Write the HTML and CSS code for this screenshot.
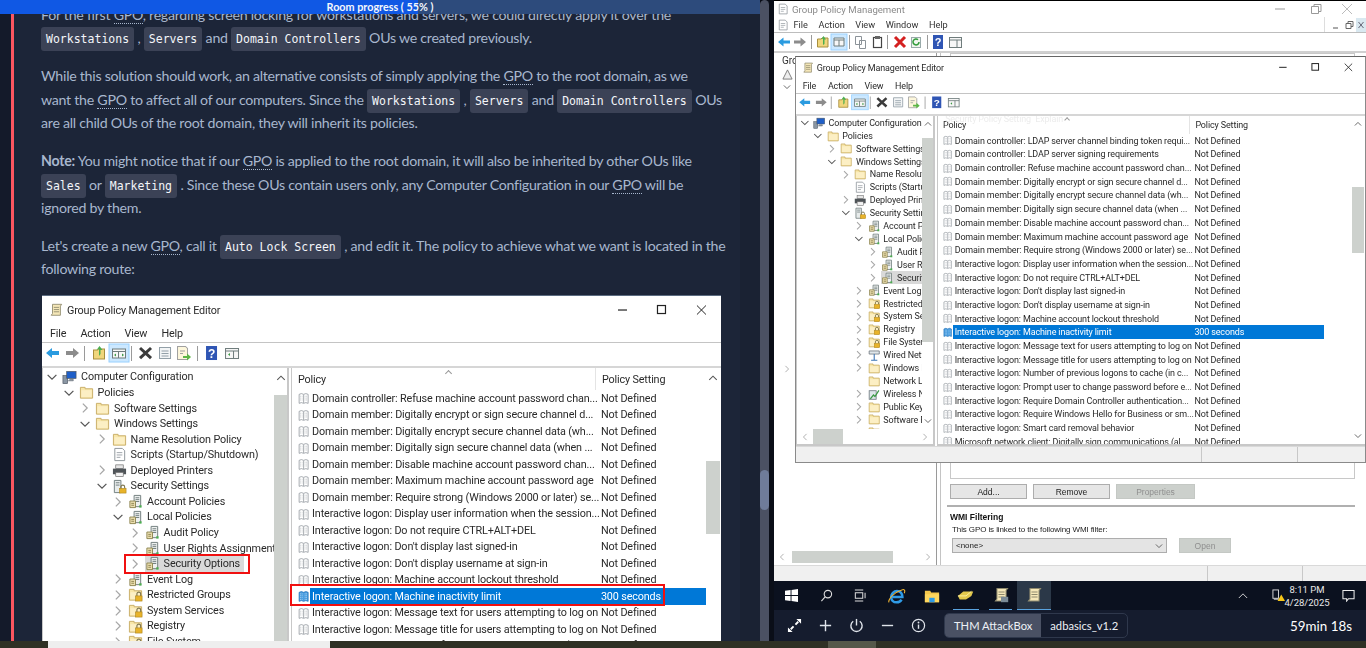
FILE: index.html
```html
<!DOCTYPE html>
<html lang="en">
<head>
    <meta charset="UTF-8">
    <meta name="viewport" content="width=device-width, initial-scale=1.0">
    <title>Room</title>
    <link rel="stylesheet" href="styles.css">
</head>
<body>
<svg class="defs" aria-hidden="true">
    <symbol id="chev-r" viewBox="0 0 16 16"><path d="M5.5 3l5 5-5 5" fill="none" stroke="#a6a6a6" stroke-width="1.4"/></symbol>
    <symbol id="chev-d" viewBox="0 0 16 16"><path d="M3 5.5l5 5 5-5" fill="none" stroke="#555" stroke-width="1.4"/></symbol>
    <symbol id="i-folder" viewBox="0 0 16 16"><path d="M1.5 2.5h5v1.5h8v10h-13z" fill="#f8e6a8" stroke="#c8ad66"/><path d="M2.5 5.5h11v7.5h-11z" fill="#fcefc4"/></symbol>
    <symbol id="i-lock" viewBox="0 0 16 16"><path d="M1.5 2.5h5v1.5h8v10h-13z" fill="#f8e6a8" stroke="#c8ad66"/><path d="M2.5 5.5h11v7.5h-11z" fill="#fcefc4"/><path d="M9.5 9.5v-2a2 2 0 0 1 4 0v2" fill="none" stroke="#7d7650" stroke-width="1.2"/><rect x="8" y="9.5" width="7" height="5.5" fill="#e8b32a" stroke="#a9811c" stroke-width=".6"/></symbol>
    <symbol id="i-policy" viewBox="0 0 16 16"><path d="M6.5 1.5h7v12h-7z" fill="#eef1f0" stroke="#6f7c7c"/><path d="M8 4h4M8 6h4M8 8h4" stroke="#6f7c7c"/><path d="M2 7.5h6v7H2z" fill="#ecdfb0" stroke="#8d8450"/><path d="M3.5 10h3M3.5 12h3" stroke="#8d8450"/><rect x="12" y="12" width="2.5" height="2.5" fill="#4caf50"/></symbol>
    <symbol id="i-doc" viewBox="0 0 16 16"><path d="M1.5 2.5l3-1 3 1 3-1 3 1v12l-3-1-3 1-3-1-3 1z" fill="#fff" stroke="#8b9298"/><path d="M7.5 3v11" stroke="#8b9298"/><path d="M3 5h3M3 7.500h3M3 10h3M9 5h3M9 7.500h3M9 10h3" stroke="#a9afb4" stroke-dasharray="1 1"/></symbol>
    <symbol id="i-doc-sel" viewBox="0 0 16 16"><path d="M1.5 2.5l3-1 3 1 3-1 3 1v12l-3-1-3 1-3-1-3 1z" fill="#4a9ee0" stroke="#1d6fb8"/><path d="M3 4.500h3M3 7h3M3 9.500h3M3 12h3M9 4.500h3M9 7h3M9 9.500h3M9 12h3" stroke="#cfe6f8" stroke-dasharray="1 1"/></symbol>
    <symbol id="i-comp" viewBox="0 0 16 16"><rect x="1" y="6" width="5" height="8.5" fill="#8b97a4" stroke="#4d5661" stroke-width=".7"/><rect x="5" y="1.5" width="10" height="7.5" fill="#1f5fc8" stroke="#4d5661" stroke-width=".7"/><path d="M8 10h4v1.5H6.5" fill="#9aa5ad" stroke="#4d5661" stroke-width=".6"/></symbol>
    <symbol id="i-script" viewBox="0 0 16 16"><path d="M3 1.5h8l2.5 2.5v10.5H3z" fill="#fff" stroke="#8b9298"/><path d="M5 6h6M5 8.5h6M5 11h4" stroke="#9aa0a6"/></symbol>
    <symbol id="i-printer" viewBox="0 0 16 16"><rect x="4" y="2" width="8" height="4" fill="#e6e6e6" stroke="#666" stroke-width=".7"/><rect x="1" y="6" width="14" height="6" fill="#4f5458"/><rect x="4" y="10" width="8" height="4.5" fill="#f2f2f2" stroke="#666" stroke-width=".7"/></symbol>
    <symbol id="i-sec" viewBox="0 0 16 16"><path d="M2.5 1.5h7v13h-7z" fill="#e8ecec" stroke="#6f7c7c"/><path d="M4 4h4M4 6.5h4" stroke="#6f7c7c"/><path d="M9.5 10V8.500a2 2 0 0 1 4 0V10" fill="none" stroke="#7d7650" stroke-width="1.2"/><rect x="8" y="10" width="7" height="5" fill="#e8b32a" stroke="#a9811c" stroke-width=".6"/></symbol>
    <symbol id="i-wired" viewBox="0 0 16 16"><path d="M1.5 2.5h13v4h-13z" fill="#dfe6ea" stroke="#69737a"/><path d="M8 6.500v8M4 14.500h8" stroke="#3d76b5" stroke-width="1.4"/></symbol>
    <symbol id="i-wifi" viewBox="0 0 16 16"><rect x="1.5" y="3.5" width="9" height="11" fill="#dfe6ea" stroke="#69737a"/><path d="M3 14l4-5 2 2 5-8" fill="none" stroke="#3d9a46" stroke-width="1.6"/></symbol>
    <symbol id="i-app" viewBox="0 0 16 16"><path d="M4 1.5h10.500l-1.500 2V14H2.500L4 12z" fill="#f5e7b8" stroke="#8f8a6e"/><path d="M5.500 5h6M5.500 7.500h6M5.500 10h6" stroke="#8f8a6e"/></symbol>
    <symbol id="winctl" viewBox="0 0 100 20"><path d="M5 10h9" stroke="#222" stroke-width="1.2"/><rect x="44.500" y="5.500" width="8" height="8" fill="none" stroke="#222" stroke-width="1.2"/><path d="M84 5.500l9 9M93 5.500l-9 9" stroke="#222"/></symbol>
    <symbol id="toolbar" viewBox="0 0 200 20">
        <path d="M4 10l6-5v3h7v4h-7v3z" fill="#2a9be0"/>
        <path d="M37 10l-6-5v3h-7v4h7v3z" fill="#8c8c8c"/>
        <path d="M42.500 3v15M89.500 3v15M155.500 3v15" stroke="#9a9a9a"/>
        <path d="M51.500 7h4l1-1h6v10h-11z" fill="#f0d67c" stroke="#a98f3e"/>
        <path d="M57 13V6l-2.500 1L57.500 3l3 4-2 0v4z" fill="#4caf50"/>
        <rect x="67" y="1" width="20" height="18" fill="#cce8ff" stroke="#99d1ff"/>
        <path d="M70.500 6h13v9h-13zM70.500 8.500h13M76.500 8.500V15" fill="#f7f7f7" stroke="#6f7c7c"/>
        <path d="M72 12l2-1.500v3zM82 12l-2-1.500v3z" fill="#3d9a46"/>
        <path d="M98 5l11 10M109 5L98 15" stroke="#3b3b3b" stroke-width="3"/>
        <path d="M117.500 4.500h11v11h-11z" fill="#f3f5f6" stroke="#93a0a8"/><path d="M119.500 8h7M119.500 10.500h7M119.500 13h7" stroke="#93a0a8"/>
        <path d="M135.500 3.500h8l2 2v11h-10z" fill="#fdf7dc" stroke="#a0a0a0"/><path d="M138 8h5M138 10.500h3" stroke="#a0a0a0"/>
        <path d="M141 13h4v-2.500l4 3.500-4 3.500v-2.500h-4z" fill="#5cb646"/>
        <rect x="164" y="3" width="11" height="14" fill="#2f55b4"/><text x="169.500" y="14.500" text-anchor="middle" font-size="12" font-weight="700" font-family="Liberation Sans" fill="#fff">?</text>
        <rect x="183.500" y="5.500" width="13" height="10" fill="#f7f7f7" stroke="#6f7c7c"/><path d="M183.500 8h13M191.500 8v7.500" stroke="#6f7c7c"/><path d="M186 11.500l2-1.500v3z" fill="#3d9a46"/>
    </symbol>
    <symbol id="backbar" viewBox="0 0 190 18">
        <path d="M4 9l5.500-4.500v3H16v3H9.500v3z" fill="#2a9be0"/>
        <path d="M32 9l-5.500-4.500v3H20v3h6.500v3z" fill="#8c8c8c"/>
        <path d="M37.500 2v14M75.500 2v14M113.500 2v14M153.500 2v14" stroke="#9a9a9a"/>
        <path d="M43.500 6h3.500l1-1h6v9h-10.500z" fill="#f0d67c" stroke="#a98f3e"/>
        <path d="M49 12V5.500l-2 1 2.500-3.500 2.500 3.500-1.500 0V11z" fill="#4caf50"/>
        <rect x="57" y="1" width="16" height="16" fill="#cce8ff" stroke="#99d1ff"/>
        <path d="M60 5h10v8H60zM60 7h10M65 7v6" fill="#f7f7f7" stroke="#6f7c7c"/>
        <path d="M81.500 3.500h6v8h-6zM85.500 7.500h6v8h-6z" fill="#fff" stroke="#8b9298"/>
        <rect x="99.500" y="4.500" width="8" height="10" fill="#fff" stroke="#444" stroke-width="1.2"/><rect x="101" y="3" width="5" height="3" fill="#666"/>
        <path d="M121 4l10 10M131 4l-10 10" stroke="#d42020" stroke-width="3"/>
        <rect x="137.500" y="4.500" width="9" height="10" fill="#f0f6ee" stroke="#9aa"/><path d="M145 9a3 3 0 1 1-1-2.300" fill="none" stroke="#2f9b3a" stroke-width="1.5"/>
        <rect x="159" y="2" width="10" height="14" fill="#2f55b4"/><text x="164" y="13" text-anchor="middle" font-size="11" font-weight="700" font-family="Liberation Sans" fill="#fff">?</text>
        <rect x="175.500" y="4.500" width="12" height="10" fill="#f7f7f7" stroke="#6f7c7c"/><path d="M175.500 7h12M183 7v7.500" stroke="#6f7c7c"/>
    </symbol>
</svg>

<div class="app">
    <div class="left">
        <div class="room-col">
            <div class="progress">
                <div class="progress-fill"></div>
                <span class="progress-label">Room progress ( 55% )</span>
            </div>
            <div class="room-body">
                <div class="strip"></div>
                <div class="redline"></div>
                <div class="article">
                    <p>For the first <abbr>GPO</abbr>, regarding screen locking for workstations and servers, we could directly apply it over the<br>
                    <code>Workstations</code> , <code>Servers</code> and <code>Domain Controllers</code> OUs we created previously.</p>
                    <p>While this solution should work, an alternative consists of simply applying the <abbr>GPO</abbr> to the root domain, as we<br>
                    want the <abbr>GPO</abbr> to affect all of our computers. Since the <code>Workstations</code> , <code>Servers</code> and <code>Domain Controllers</code> OUs<br>
                    are all child OUs of the root domain, they will inherit its policies.</p>
                    <p><b>Note:</b> You might notice that if our <abbr>GPO</abbr> is applied to the root domain, it will also be inherited by other OUs like<br>
                    <code>Sales</code> or <code>Marketing</code> . Since these OUs contain users only, any Computer Configuration in our <abbr>GPO</abbr> will be<br>
                    ignored by them.</p>
                    <p>Let's create a new <abbr>GPO</abbr>, call it <code>Auto Lock Screen</code> , and edit it. The policy to achieve what we want is located in the<br>
                    following route:</p>

                    <div class="figure">
                        <div class="gpe gpe-large">
                            <div class="gpe-title">
                                <svg class="app-ic"><use href="#i-app"/></svg>
                                <span>Group Policy Management Editor</span>
                                <svg class="win-ctl"><use href="#winctl"/></svg>
                            </div>
                            <div class="gpe-menu"><span>File</span><span>Action</span><span>View</span><span>Help</span></div>
                            <svg class="gpe-tools"><use href="#toolbar"/></svg>
                            <div class="panes">
                                <div class="tree">
                                    <div class="nodes">
                                        <div class="node l0"><svg class="tw"><use href="#chev-d"/></svg><svg class="ic"><use href="#i-comp"/></svg><span>Computer Configuration</span></div>
                                        <div class="node l1"><svg class="tw"><use href="#chev-d"/></svg><svg class="ic"><use href="#i-folder"/></svg><span>Policies</span></div>
                                        <div class="node l2"><svg class="tw"><use href="#chev-r"/></svg><svg class="ic"><use href="#i-folder"/></svg><span>Software Settings</span></div>
                                        <div class="node l2"><svg class="tw"><use href="#chev-d"/></svg><svg class="ic"><use href="#i-folder"/></svg><span>Windows Settings</span></div>
                                        <div class="node l3"><svg class="tw"><use href="#chev-r"/></svg><svg class="ic"><use href="#i-folder"/></svg><span>Name Resolution Policy</span></div>
                                        <div class="node l3"><i class="tw"></i><svg class="ic"><use href="#i-script"/></svg><span>Scripts (Startup/Shutdown)</span></div>
                                        <div class="node l3"><svg class="tw"><use href="#chev-r"/></svg><svg class="ic"><use href="#i-printer"/></svg><span>Deployed Printers</span></div>
                                        <div class="node l3"><svg class="tw"><use href="#chev-d"/></svg><svg class="ic"><use href="#i-sec"/></svg><span>Security Settings</span></div>
                                        <div class="node l4"><svg class="tw"><use href="#chev-r"/></svg><svg class="ic"><use href="#i-policy"/></svg><span>Account Policies</span></div>
                                        <div class="node l4"><svg class="tw"><use href="#chev-d"/></svg><svg class="ic"><use href="#i-policy"/></svg><span>Local Policies</span></div>
                                        <div class="node l5"><svg class="tw"><use href="#chev-r"/></svg><svg class="ic"><use href="#i-policy"/></svg><span>Audit Policy</span></div>
                                        <div class="node l5"><svg class="tw"><use href="#chev-r"/></svg><svg class="ic"><use href="#i-policy"/></svg><span>User Rights Assignment</span></div>
                                        <div class="node l5 current"><svg class="tw"><use href="#chev-r"/></svg><div class="current-box"><svg class="ic"><use href="#i-policy"/></svg><span>Security Options</span></div></div>
                                        <div class="node l4"><svg class="tw"><use href="#chev-r"/></svg><svg class="ic"><use href="#i-policy"/></svg><span>Event Log</span></div>
                                        <div class="node l4"><svg class="tw"><use href="#chev-r"/></svg><svg class="ic"><use href="#i-lock"/></svg><span>Restricted Groups</span></div>
                                        <div class="node l4"><svg class="tw"><use href="#chev-r"/></svg><svg class="ic"><use href="#i-lock"/></svg><span>System Services</span></div>
                                        <div class="node l4"><svg class="tw"><use href="#chev-r"/></svg><svg class="ic"><use href="#i-lock"/></svg><span>Registry</span></div>
                                        <div class="node l4"><svg class="tw"><use href="#chev-r"/></svg><svg class="ic"><use href="#i-lock"/></svg><span>File System</span></div>
                                    </div>
                                    <div class="sb sb-tree"><svg class="sb-arrow"><use href="#chev-d"/></svg><div class="sb-thumb"></div></div>
                                </div>
                                <div class="list">
                                    <div class="list-main">
                                        <div class="list-head"><span class="head-name">Policy</span><span class="head-val">Policy Setting</span><i class="sort-caret"></i></div>
                                        <div class="row"><svg class="ic"><use href="#i-doc"/></svg><div class="cell"><span class="name">Domain controller: Refuse machine account password chan...</span><span>Not Defined</span></div></div>
                                        <div class="row"><svg class="ic"><use href="#i-doc"/></svg><div class="cell"><span class="name">Domain member: Digitally encrypt or sign secure channel d...</span><span>Not Defined</span></div></div>
                                        <div class="row"><svg class="ic"><use href="#i-doc"/></svg><div class="cell"><span class="name">Domain member: Digitally encrypt secure channel data (wh...</span><span>Not Defined</span></div></div>
                                        <div class="row"><svg class="ic"><use href="#i-doc"/></svg><div class="cell"><span class="name">Domain member: Digitally sign secure channel data (when ...</span><span>Not Defined</span></div></div>
                                        <div class="row"><svg class="ic"><use href="#i-doc"/></svg><div class="cell"><span class="name">Domain member: Disable machine account password chan...</span><span>Not Defined</span></div></div>
                                        <div class="row"><svg class="ic"><use href="#i-doc"/></svg><div class="cell"><span class="name">Domain member: Maximum machine account password age</span><span>Not Defined</span></div></div>
                                        <div class="row"><svg class="ic"><use href="#i-doc"/></svg><div class="cell"><span class="name">Domain member: Require strong (Windows 2000 or later) se...</span><span>Not Defined</span></div></div>
                                        <div class="row"><svg class="ic"><use href="#i-doc"/></svg><div class="cell"><span class="name">Interactive logon: Display user information when the session...</span><span>Not Defined</span></div></div>
                                        <div class="row"><svg class="ic"><use href="#i-doc"/></svg><div class="cell"><span class="name">Interactive logon: Do not require CTRL+ALT+DEL</span><span>Not Defined</span></div></div>
                                        <div class="row"><svg class="ic"><use href="#i-doc"/></svg><div class="cell"><span class="name">Interactive logon: Don't display last signed-in</span><span>Not Defined</span></div></div>
                                        <div class="row"><svg class="ic"><use href="#i-doc"/></svg><div class="cell"><span class="name">Interactive logon: Don't display username at sign-in</span><span>Not Defined</span></div></div>
                                        <div class="row"><svg class="ic"><use href="#i-doc"/></svg><div class="cell"><span class="name">Interactive logon: Machine account lockout threshold</span><span>Not Defined</span></div></div>
                                        <div class="row selected"><svg class="ic"><use href="#i-doc-sel"/></svg><div class="cell"><span class="name">Interactive logon: Machine inactivity limit</span><span>300 seconds</span></div></div>
                                        <div class="row"><svg class="ic"><use href="#i-doc"/></svg><div class="cell"><span class="name">Interactive logon: Message text for users attempting to log on</span><span>Not Defined</span></div></div>
                                        <div class="row"><svg class="ic"><use href="#i-doc"/></svg><div class="cell"><span class="name">Interactive logon: Message title for users attempting to log on</span><span>Not Defined</span></div></div>
                                        <div class="row"><svg class="ic"><use href="#i-doc"/></svg><div class="cell"><span class="name">Interactive logon: Number of previous logons to cache (in c...</span><span>Not Defined</span></div></div>
                                    </div>
                                    <div class="sb sb-list"><svg class="sb-arrow"><use href="#chev-d"/></svg><div class="sb-thumb"></div></div>
                                </div>
                            </div>
                        </div>
                        <div class="mark mark-tree"></div>
                        <div class="mark mark-row"></div>
                    </div>
                </div>
                <div class="article-edge"></div>
            </div>
        </div>
        <div class="vbar"><div class="vbar-thumb"></div></div>
    </div>

    <div class="remote">
        <div class="desk">
            <div class="backwin">
                <div class="bw-title">
                    <svg class="bw-ic"><use href="#i-script"/></svg><span>Group Policy Management</span>
                    <svg class="bw-ctl" viewBox="0 0 90 16"><path d="M2 8h10" stroke="#999"/><path d="M38.500 5.500h7v7h-7zM41 5.500V3.500h7v7h-2.500" fill="none" stroke="#999"/><path d="M69 3l10 10M79 3L69 13" stroke="#bbb"/></svg>
                </div>
                <div class="bw-menu">
                    <svg class="bw-ic"><use href="#i-script"/></svg>
                    <span>File</span><span>Action</span><span>View</span><span>Window</span><span>Help</span>
                    <svg class="bw-mdi" viewBox="0 0 42 16"><path d="M0 0v16" stroke="#bbb"/><path d="M9 11h5" stroke="#555"/><path d="M22 6.500h5v5h-5zM24 6.500V4.500h5v5h-2" fill="none" stroke="#666"/><rect x="32" y="1" width="10" height="14" fill="#d9e8f0"/><path d="M34.500 5l5 6M39.500 5l-5 6" stroke="#667"/></svg>
                </div>
                <svg class="bw-tools"><use href="#backbar"/></svg>
                <div class="bw-body">
                    <div class="bw-tree">
                        <div class="bw-tree-rows">
                            <div class="bw-gro">Gro</div>
                            <svg class="bw-tri" viewBox="0 0 12 12"><path d="M6 1l5 10H1z" fill="#eee" stroke="#777"/></svg>
                            <svg class="bw-chev"><use href="#chev-d"/></svg>
                            <svg class="bw-chev-low"><use href="#chev-r"/></svg>
                        </div>
                        <div class="hscroll hscroll-back"><svg class="hs-arrow flip"><use href="#chev-r"/></svg><div class="hs-thumb"></div><svg class="hs-arrow"><use href="#chev-r"/></svg></div>
                    </div>
                    <div class="bw-detail">
                        <div class="gpo-box"></div>
                        <div class="bw-buttons"><span class="btn">Add...</span><span class="btn">Remove</span><span class="btn off">Properties</span></div>
                        <div class="bw-rule"></div>
                        <div class="wmi-title">WMI Filtering</div>
                        <div class="wmi-desc">This GPO is linked to the following WMI filter:</div>
                        <div class="wmi-row">
                            <div class="wmi-select"><span>&lt;none&gt;</span><svg class="wmi-chev"><use href="#chev-d"/></svg></div>
                            <span class="btn off open">Open</span>
                        </div>
                    </div>
                </div>
                <div class="statusbar"><span class="st st-a"></span><span class="st st-b"></span></div>
            </div>

            <div class="gpe gpe-small">
                <div class="gpe-title">
                    <svg class="app-ic"><use href="#i-app"/></svg>
                    <span>Group Policy Management Editor</span>
                    <svg class="win-ctl"><use href="#winctl"/></svg>
                </div>
                <div class="gpe-menu"><span>File</span><span>Action</span><span>View</span><span>Help</span></div>
                <svg class="gpe-tools"><use href="#toolbar"/></svg>
                <div class="panes">
                    <div class="tree">
                        <div class="tree-inner">
                            <div class="nodes">
                                <div class="node l0"><svg class="tw"><use href="#chev-d"/></svg><svg class="ic"><use href="#i-comp"/></svg><span>Computer Configuration</span></div>
                                <div class="node l1"><svg class="tw"><use href="#chev-d"/></svg><svg class="ic"><use href="#i-folder"/></svg><span>Policies</span></div>
                                <div class="node l2"><svg class="tw"><use href="#chev-r"/></svg><svg class="ic"><use href="#i-folder"/></svg><span>Software Settings</span></div>
                                <div class="node l2"><svg class="tw"><use href="#chev-d"/></svg><svg class="ic"><use href="#i-folder"/></svg><span>Windows Settings</span></div>
                                <div class="node l3"><svg class="tw"><use href="#chev-r"/></svg><svg class="ic"><use href="#i-folder"/></svg><span>Name Resolution Policy</span></div>
                                <div class="node l3"><i class="tw"></i><svg class="ic"><use href="#i-script"/></svg><span>Scripts (Startup/Shutdown)</span></div>
                                <div class="node l3"><svg class="tw"><use href="#chev-r"/></svg><svg class="ic"><use href="#i-printer"/></svg><span>Deployed Printers</span></div>
                                <div class="node l3"><svg class="tw"><use href="#chev-d"/></svg><svg class="ic"><use href="#i-sec"/></svg><span>Security Settings</span></div>
                                <div class="node l4"><svg class="tw"><use href="#chev-r"/></svg><svg class="ic"><use href="#i-policy"/></svg><span>Account Policies</span></div>
                                <div class="node l4"><svg class="tw"><use href="#chev-d"/></svg><svg class="ic"><use href="#i-policy"/></svg><span>Local Policies</span></div>
                                <div class="node l5"><svg class="tw"><use href="#chev-r"/></svg><svg class="ic"><use href="#i-policy"/></svg><span>Audit Policy</span></div>
                                <div class="node l5"><svg class="tw"><use href="#chev-r"/></svg><svg class="ic"><use href="#i-policy"/></svg><span>User Rights Assignment</span></div>
                                <div class="node l5 current"><svg class="tw"><use href="#chev-r"/></svg><div class="current-box"><svg class="ic"><use href="#i-policy"/></svg><span>Security Options</span></div></div>
                                <div class="node l4"><svg class="tw"><use href="#chev-r"/></svg><svg class="ic"><use href="#i-policy"/></svg><span>Event Log</span></div>
                                <div class="node l4"><svg class="tw"><use href="#chev-r"/></svg><svg class="ic"><use href="#i-lock"/></svg><span>Restricted Groups</span></div>
                                <div class="node l4"><svg class="tw"><use href="#chev-r"/></svg><svg class="ic"><use href="#i-lock"/></svg><span>System Services</span></div>
                                <div class="node l4"><svg class="tw"><use href="#chev-r"/></svg><svg class="ic"><use href="#i-lock"/></svg><span>Registry</span></div>
                                <div class="node l4"><svg class="tw"><use href="#chev-r"/></svg><svg class="ic"><use href="#i-lock"/></svg><span>File System</span></div>
                                <div class="node l4"><svg class="tw"><use href="#chev-r"/></svg><svg class="ic"><use href="#i-wired"/></svg><span>Wired Network</span></div>
                                <div class="node l4"><svg class="tw"><use href="#chev-r"/></svg><svg class="ic"><use href="#i-folder"/></svg><span>Windows Firewall</span></div>
                                <div class="node l4"><i class="tw"></i><svg class="ic"><use href="#i-folder"/></svg><span>Network List</span></div>
                                <div class="node l4"><svg class="tw"><use href="#chev-r"/></svg><svg class="ic"><use href="#i-wifi"/></svg><span>Wireless Network</span></div>
                                <div class="node l4"><svg class="tw"><use href="#chev-r"/></svg><svg class="ic"><use href="#i-folder"/></svg><span>Public Key</span></div>
                                <div class="node l4"><svg class="tw"><use href="#chev-r"/></svg><svg class="ic"><use href="#i-folder"/></svg><span>Software Restriction</span></div>
                                <div class="node l4"><svg class="tw"><use href="#chev-r"/></svg><svg class="ic"><use href="#i-folder"/></svg><span>Application Control</span></div>
                            </div>
                            <div class="sb sb-tree"><svg class="sb-arrow"><use href="#chev-d"/></svg><div class="sb-thumb"></div><svg class="sb-arrow sb-down"><use href="#chev-d"/></svg></div>
                        </div>
                        <div class="hscroll"><svg class="hs-arrow flip"><use href="#chev-r"/></svg><div class="hs-thumb"></div><svg class="hs-arrow"><use href="#chev-r"/></svg></div>
                    </div>
                    <div class="list">
                        <div class="list-main">
                            <div class="list-head"><span class="head-ghost">Security Policy Setting &nbsp;Explain</span><span class="head-name">Policy</span><span class="head-val">Policy Setting</span><i class="sort-caret"></i></div>
                            <div class="row"><svg class="ic"><use href="#i-doc"/></svg><div class="cell"><span class="name">Domain controller: LDAP server channel binding token requi...</span><span>Not Defined</span></div></div>
                            <div class="row"><svg class="ic"><use href="#i-doc"/></svg><div class="cell"><span class="name">Domain controller: LDAP server signing requirements</span><span>Not Defined</span></div></div>
                            <div class="row"><svg class="ic"><use href="#i-doc"/></svg><div class="cell"><span class="name">Domain controller: Refuse machine account password chan...</span><span>Not Defined</span></div></div>
                            <div class="row"><svg class="ic"><use href="#i-doc"/></svg><div class="cell"><span class="name">Domain member: Digitally encrypt or sign secure channel d...</span><span>Not Defined</span></div></div>
                            <div class="row"><svg class="ic"><use href="#i-doc"/></svg><div class="cell"><span class="name">Domain member: Digitally encrypt secure channel data (wh...</span><span>Not Defined</span></div></div>
                            <div class="row"><svg class="ic"><use href="#i-doc"/></svg><div class="cell"><span class="name">Domain member: Digitally sign secure channel data (when ...</span><span>Not Defined</span></div></div>
                            <div class="row"><svg class="ic"><use href="#i-doc"/></svg><div class="cell"><span class="name">Domain member: Disable machine account password chan...</span><span>Not Defined</span></div></div>
                            <div class="row"><svg class="ic"><use href="#i-doc"/></svg><div class="cell"><span class="name">Domain member: Maximum machine account password age</span><span>Not Defined</span></div></div>
                            <div class="row"><svg class="ic"><use href="#i-doc"/></svg><div class="cell"><span class="name">Domain member: Require strong (Windows 2000 or later) se...</span><span>Not Defined</span></div></div>
                            <div class="row"><svg class="ic"><use href="#i-doc"/></svg><div class="cell"><span class="name">Interactive logon: Display user information when the session...</span><span>Not Defined</span></div></div>
                            <div class="row"><svg class="ic"><use href="#i-doc"/></svg><div class="cell"><span class="name">Interactive logon: Do not require CTRL+ALT+DEL</span><span>Not Defined</span></div></div>
                            <div class="row"><svg class="ic"><use href="#i-doc"/></svg><div class="cell"><span class="name">Interactive logon: Don't display last signed-in</span><span>Not Defined</span></div></div>
                            <div class="row"><svg class="ic"><use href="#i-doc"/></svg><div class="cell"><span class="name">Interactive logon: Don't display username at sign-in</span><span>Not Defined</span></div></div>
                            <div class="row"><svg class="ic"><use href="#i-doc"/></svg><div class="cell"><span class="name">Interactive logon: Machine account lockout threshold</span><span>Not Defined</span></div></div>
                            <div class="row selected"><svg class="ic"><use href="#i-doc-sel"/></svg><div class="cell"><span class="name">Interactive logon: Machine inactivity limit</span><span>300 seconds</span></div></div>
                            <div class="row"><svg class="ic"><use href="#i-doc"/></svg><div class="cell"><span class="name">Interactive logon: Message text for users attempting to log on</span><span>Not Defined</span></div></div>
                            <div class="row"><svg class="ic"><use href="#i-doc"/></svg><div class="cell"><span class="name">Interactive logon: Message title for users attempting to log on</span><span>Not Defined</span></div></div>
                            <div class="row"><svg class="ic"><use href="#i-doc"/></svg><div class="cell"><span class="name">Interactive logon: Number of previous logons to cache (in c...</span><span>Not Defined</span></div></div>
                            <div class="row"><svg class="ic"><use href="#i-doc"/></svg><div class="cell"><span class="name">Interactive logon: Prompt user to change password before e...</span><span>Not Defined</span></div></div>
                            <div class="row"><svg class="ic"><use href="#i-doc"/></svg><div class="cell"><span class="name">Interactive logon: Require Domain Controller authentication...</span><span>Not Defined</span></div></div>
                            <div class="row"><svg class="ic"><use href="#i-doc"/></svg><div class="cell"><span class="name">Interactive logon: Require Windows Hello for Business or sm...</span><span>Not Defined</span></div></div>
                            <div class="row"><svg class="ic"><use href="#i-doc"/></svg><div class="cell"><span class="name">Interactive logon: Smart card removal behavior</span><span>Not Defined</span></div></div>
                            <div class="row"><svg class="ic"><use href="#i-doc"/></svg><div class="cell"><span class="name">Microsoft network client: Digitally sign communications (al...</span><span>Not Defined</span></div></div>
                        </div>
                        <div class="sb sb-list"><svg class="sb-arrow"><use href="#chev-d"/></svg><div class="sb-thumb"></div><svg class="sb-arrow sb-down"><use href="#chev-d"/></svg></div>
                    </div>
                </div>
                <div class="statusbar"><span class="st st-a"></span><span class="st st-b"></span></div>
            </div>
        </div>

        <div class="taskbar">
            <svg class="tb-win" viewBox="0 0 14 14"><path d="M0 2l6-1v5.500H0zM7 1l7-1v6.500H7zM0 7.500h6V13l-6-1zM7 7.500h7V14l-7-1z" fill="#fff"/></svg>
            <svg class="tb-search" viewBox="0 0 14 14"><circle cx="8.500" cy="5.500" r="4" fill="none" stroke="#ddd" stroke-width="1.2"/><path d="M5.500 8.500L1.500 13" stroke="#ddd" stroke-width="1.2"/></svg>
            <svg class="tb-view" viewBox="0 0 14 14"><path d="M2 1h9M2 13h9M2.500 4h8v6h-8zM13 4v6" fill="none" stroke="#ddd" stroke-width="1.1"/></svg>
            <svg class="tb-ie" viewBox="0 0 20 20"><path d="M4 11h12c0-4-2.500-6.500-6-6.500S3.500 7.500 3.500 11s2.500 6 6 6c2.500 0 4.500-1 5.500-3" fill="none" stroke="#2f9be6" stroke-width="2.8"/><path d="M1 17c-1-3 5-11 15-14 3-1 3 2 2 4" fill="none" stroke="#f2b632" stroke-width="1.2"/></svg>
            <svg class="tb-folder" viewBox="0 0 18 18"><path d="M1 3h6l1 2h9v11H1z" fill="#f5c84c"/><rect x="1" y="7" width="16" height="9" fill="#ffd75e"/><rect x="6" y="11" width="6" height="5" fill="#2f9be6"/></svg>
            <div class="tb-item tb-gold"><svg viewBox="0 0 20 14"><path d="M1 8l6-5h11l-2 5-6 4H3z" fill="#e2c84c"/><path d="M1 8h9l6-5" fill="none" stroke="#fff3a8"/></svg></div>
            <div class="tb-item tb-scroll"><svg viewBox="0 0 18 20"><use href="#i-app"/><rect x="9" y="12" width="8" height="6" fill="#7a8a96"/></svg></div>
            <div class="tb-item tb-active"><svg viewBox="0 0 18 20"><use href="#i-app"/></svg></div>
            <svg class="tb-up" viewBox="0 0 12 8"><path d="M1 7l5-5 5 5" fill="none" stroke="#ddd" stroke-width="1.1"/></svg>
            <svg class="tb-net" viewBox="0 0 14 14"><rect x="1" y="1" width="6" height="9" fill="none" stroke="#ddd"/><path d="M2 11h8" stroke="#ddd"/><path d="M10 6l4 7H6z" fill="#f5c518"/></svg>
            <div class="tb-clock"><span>8:11 PM</span><span>4/28/2025</span></div>
            <svg class="tb-note" viewBox="0 0 14 14"><path d="M1 1.500h12v9H7l-2 2.500v-2.500H1z" fill="none" stroke="#eee" stroke-width="1.1"/></svg>
        </div>

        <div class="thm">
            <svg class="thm-ic" viewBox="0 0 16 16"><path d="M10 1h5v5zM1 15v-5l5 5z" fill="#fff"/><path d="M12 4L9 7M4 12l3-3" stroke="#fff" stroke-width="2"/></svg>
            <svg class="thm-ic" viewBox="0 0 16 16"><path d="M8 2v12M2 8h12" stroke="#dfe3ea" stroke-width="1.5"/></svg>
            <svg class="thm-ic" viewBox="0 0 16 16"><path d="M8 1v7" stroke="#dfe3ea" stroke-width="1.5"/><path d="M4.500 3.500a6 6 0 1 0 7 0" fill="none" stroke="#dfe3ea" stroke-width="1.5"/></svg>
            <svg class="thm-ic" viewBox="0 0 16 16"><path d="M2 8h12" stroke="#dfe3ea" stroke-width="1.5"/></svg>
            <svg class="thm-ic" viewBox="0 0 16 16"><circle cx="8" cy="8" r="6.500" fill="none" stroke="#dfe3ea" stroke-width="1.3"/><path d="M8 7v4.500" stroke="#dfe3ea" stroke-width="1.5"/><circle cx="8" cy="4.800" r="1" fill="#dfe3ea"/></svg>
            <div class="thm-tabs"><span class="thm-tab on">THM AttackBox</span><span class="thm-tab">adbasics_v1.2</span></div>
            <span class="thm-time">59min 18s</span>
        </div>
    </div>
</div>
<div class="wallpaper"><span class="wp-light"></span><span class="wp-grey"></span></div>
</body>
</html>
```

FILE: styles.css
```css
* {
    margin: 0;
    padding: 0;
    box-sizing: border-box;
}

html, body {
    width: 1366px;
    height: 648px;
    overflow: hidden;
    background: #2f3125;
}

.defs {
    display: none;
}

.app {
    display: flex;
    height: 641px;
    background: #0a0e18;
}

/* left: the room article */
.left {
    display: flex;
    width: 769px;
    flex-shrink: 0;
}

.room-col {
    width: 760px;
    display: flex;
    flex-direction: column;
    overflow: hidden;
}

.progress {
    height: 14px;
    display: flex;
    justify-content: center;
    background: #2d4b7c;
    position: relative;
    z-index: 1;
    flex-shrink: 0;
}

.progress-fill {
    position: absolute;
    left: 0;
    top: 0;
    bottom: 0;
    width: 55%;
    background: #1058e4;
}

.progress-label {
    position: relative;
    font: 700 10.8px/14px Lato, sans-serif;
    color: #f4f7fc;
}

.room-body {
    flex: 1;
    display: flex;
    min-height: 0;
    margin-top: -11px;
}

.strip {
    width: 11px;
    background: #141a2a;
}

.redline {
    width: 3px;
    background: #fb5660;
}

.article {
    width: 726px;
    padding-left: 27px;
    background: #1c2538;
    color: #a8b7ce;
    font: 14.2px/23.4px Lato, sans-serif;
    letter-spacing: -.27px;
    display: flex;
    flex-direction: column;
    white-space: nowrap;
}

.article-edge {
    flex: 1;
    background: #1a2233;
}

.article p {
    margin-bottom: 14.6px;
}

.article b {
    font-weight: 700;
}

abbr {
    border-bottom: 1px dotted #a8b7ce;
}

code {
    font: 11.5px "DejaVu Sans Mono", monospace;
    letter-spacing: 0;
    background: #3b4256;
    color: #f4f6fa;
    padding: 5px 5px;
    border-radius: 3px;
}

.figure {
    flex: 1;
    min-height: 0;
    margin-left: 1px;
    width: 679px;
    position: relative;
    overflow: hidden;
    border-top: 1px solid #5b6b80;
}

.mark {
    position: absolute;
    border: 2px solid #f01010;
}

.mark-tree {
    left: 82px;
    top: 258px;
    width: 126px;
    height: 20px;
}

.mark-row {
    left: 248px;
    top: 288px;
    width: 375px;
    height: 22px;
}

.vbar {
    width: 9px;
    background: #4b5163;
    border-radius: 5px 5px 0 0;
    padding-top: 470px;
}

.vbar-thumb {
    height: 40px;
    background: #6f7c9a;
    border-radius: 5px;
}

/* group policy editor window, sizes in em so the two copies scale together */
.gpe {
    display: flex;
    flex-direction: column;
    background: #fff;
    color: #2a2a2a;
    font-family: Roboto, "Noto Sans", sans-serif;
    letter-spacing: -.012em;
    white-space: nowrap;
    overflow: hidden;
    filter: blur(.3px);
}

.gpe span {
    font-size: .9em;
}

.gpe-large {
    font-size: 12px;
    height: 100%;
}

.gpe-small {
    font-size: 9.96px;
    position: absolute;
    left: 21px;
    top: 55px;
    width: 571px;
    height: 407px;
    border: 1px solid #8a8a8a;
    border-top-color: #666;
}

.gpe-title {
    height: 2.33em;
    display: flex;
    align-items: center;
    padding: 0 .67em 0 .58em;
    flex-shrink: 0;
}

.gpe-small .gpe-title {
    height: 21px;
}

.gpe-title span {
    margin-left: .37em;
}

.app-ic {
    width: 1.17em;
    height: 1.17em;
}

.win-ctl {
    margin-left: auto;
    width: 8.33em;
    height: 1.67em;
}

.gpe-menu {
    height: 1.58em;
    display: flex;
    align-items: center;
    gap: 1.17em;
    padding-left: .67em;
    border-bottom: 1px solid #c4c4c4;
    flex-shrink: 0;
}

.gpe-small .gpe-menu {
    height: 16px;
}

.gpe-tools {
    width: 16.67em;
    height: 1.67em;
    display: block;
    flex-shrink: 0;
}

.panes {
    flex: 1;
    min-height: 0;
    display: flex;
    margin-top: .25em;
    background: #fff;
    border-top: 2px solid #d6d6d6;
}

.gpe-small .panes {
    margin-top: 3px;
}

.tree {
    display: flex;
    border: 1px solid #c8c8c8;
    border-width: 0 2px 0 1px;
    overflow: hidden;
    flex-shrink: 0;
}

.gpe-large .tree {
    width: 247px;
}

.gpe-small .tree {
    width: 139px;
    flex-direction: column;
    border-bottom-width: 2px;
}

.tree-inner {
    flex: 1;
    min-height: 0;
    display: flex;
}

.nodes {
    flex: 1;
    min-width: 0;
    overflow: hidden;
    padding-top: .08em;
}

.node {
    height: 1.297em;
    display: flex;
    align-items: center;
}

.l0 { padding-left: .17em; }
.l1 { padding-left: 1.55em; }
.l2 { padding-left: 2.92em; }
.l3 { padding-left: 4.3em; }
.l4 { padding-left: 5.67em; }
.l5 { padding-left: 7.05em; }

.tw {
    width: 1.17em;
    height: 1.17em;
    margin-right: .25em;
    flex-shrink: 0;
}

.ic {
    width: 1.25em;
    height: 1.25em;
    flex-shrink: 0;
}

.node span {
    margin-left: .37em;
}

.current-box {
    display: flex;
    align-items: center;
    width: 8.25em;
    height: 100%;
    background: #d9d9d9;
}

.sb {
    display: flex;
    flex-direction: column;
    flex-shrink: 0;
    align-items: center;
}

.sb-arrow {
    width: 1em;
    height: 1em;
    margin-top: .3em;
    transform: rotate(180deg);
    flex-shrink: 0;
}

.sb-down {
    transform: none;
    margin-top: auto;
    margin-bottom: .3em;
}

.sb-thumb {
    width: 100%;
    background: #cdd1cd;
}

.sb-tree {
    width: 1.08em;
}

.sb-list {
    width: 1.17em;
    margin-right: .1em;
}

.gpe-large .sb-tree .sb-thumb {
    margin-top: 11px;
    height: 260px;
}

.gpe-large .sb-list .sb-thumb {
    margin-top: 77px;
    height: 73px;
}

.gpe-small .sb-tree .sb-thumb {
    margin-top: 9px;
    height: 204px;
}

.gpe-small .sb-list .sb-thumb {
    margin-top: 58px;
    height: 66px;
}

.hscroll {
    height: 15px;
    display: flex;
    align-items: center;
    flex-shrink: 0;
}

.hs-arrow {
    width: 10px;
    height: 10px;
    flex-shrink: 0;
    margin: 0 3px;
}

.flip {
    transform: rotate(180deg);
}

.hs-thumb {
    width: 30px;
    height: 100%;
    background: #cdd1cd;
    margin-right: auto;
}

.list {
    flex: 1;
    min-width: 0;
    display: flex;
    margin-left: 2px;
    border-left: 1px solid #c8c8c8;
}

.gpe-small .list {
    border-bottom: 2px solid #c8c8c8;
}

.list-main {
    flex: 1;
    min-width: 0;
    overflow: hidden;
}

.gpe-small .list-main {
    flex: none;
    width: 386px;
    margin-right: auto;
}

.list-head {
    height: 1.83em;
    display: flex;
    align-items: center;
    padding-left: .5em;
    position: relative;
}

.head-name {
    width: 27.5em;
    padding-top: .1em;
}

.head-val {
    padding: .1em 0 0 .55em;
    border-left: 1px solid #e4e4e4;
    height: 100%;
    display: flex;
    align-items: center;
}

/* faint repaint left over from the window underneath */
.head-ghost {
    position: absolute;
    left: .8em;
    top: -.2em;
    color: #ececec;
}

.sort-caret {
    position: absolute;
    left: 12.8em;
    top: .2em;
    width: .42em;
    height: .42em;
    border: 1px solid #999;
    border-width: 1px 0 0 1px;
    transform: rotate(45deg);
}

.row {
    height: 1.375em;
    display: flex;
    align-items: center;
    padding-left: .5em;
}

.row .ic {
    width: 1em;
    height: 1.08em;
}

.cell {
    flex: 1;
    min-width: 0;
    height: 100%;
    display: flex;
    align-items: center;
}

.name {
    width: 26.94em;
    padding-left: .19em;
    flex-shrink: 0;
    overflow: hidden;
}

.row.selected .cell {
    background: #0078d7;
    color: #fff;
}

/* right: the remote desktop */
.remote {
    width: 592px;
    margin-left: 5px;
    display: flex;
    flex-direction: column;
    flex-shrink: 0;
    overflow: hidden;
}

.desk {
    height: 581px;
    position: relative;
    border-top: 1px solid #000;
    flex-shrink: 0;
}

.backwin {
    height: 100%;
    display: flex;
    flex-direction: column;
    background: #fff;
    font-family: "Liberation Sans", sans-serif;
    filter: blur(.3px);
}

.bw-title {
    height: 16px;
    display: flex;
    align-items: center;
    padding-left: 3px;
    font: 9.6px Roboto, sans-serif;
    color: #8a8a8a;
    flex-shrink: 0;
}

.bw-ic {
    width: 12px;
    height: 12px;
    margin-right: 3px;
}

.bw-ctl {
    margin-left: auto;
    margin-right: 3px;
    width: 90px;
    height: 16px;
}

.bw-menu {
    height: 16px;
    display: flex;
    align-items: center;
    gap: 10.5px;
    padding-left: 3px;
    font: 9.2px Roboto, sans-serif;
    color: #333;
    border-bottom: 1px solid #bdbdbd;
    flex-shrink: 0;
}

.bw-menu .bw-ic {
    margin-right: -6px;
}

.bw-mdi {
    margin-left: auto;
    width: 42px;
    height: 16px;
}

.bw-tools {
    width: 190px;
    height: 18px;
    display: block;
    flex-shrink: 0;
}

.bw-body {
    flex: 1;
    min-height: 0;
    display: flex;
    border-top: 2px solid #d0d0d0;
}

.bw-tree {
    width: 163px;
    display: flex;
    flex-direction: column;
    border-right: 1px solid #9a9a9a;
    flex-shrink: 0;
}

.bw-tree-rows {
    flex: 1;
    padding: 2px 0 0 8px;
    font: 10px Roboto, sans-serif;
    color: #333;
    overflow: hidden;
}

.bw-gro {
    height: 13px;
}

.bw-tri {
    display: block;
    width: 11px;
    height: 11px;
    margin: 1px 0 0 0;
}

.bw-chev {
    display: block;
    width: 10px;
    height: 10px;
    margin-top: 2px;
}

.bw-chev-low {
    display: block;
    width: 10px;
    height: 10px;
    margin-top: 272px;
}

.hscroll-back {
    height: 12px;
    margin-bottom: 2px;
}

.hscroll-back .hs-thumb {
    width: 101px;
    margin-left: 2px;
}

.bw-detail {
    flex: 1;
    min-width: 0;
    display: flex;
    flex-direction: column;
    margin-left: 3px;
    padding: 0 11px 12px 9px;
    border-left: 1px solid #c4c4c4;
}

.gpo-box {
    flex: 1;
    border: 1px solid #c8c8c8;
}

.bw-buttons {
    display: flex;
    gap: 6px;
    margin-top: 5px;
}

.btn {
    width: 77px;
    height: 15px;
    display: flex;
    align-items: center;
    justify-content: center;
    background: #e6e6e6;
    border: 1px solid #adadad;
    font-size: 8.5px;
    color: #222;
}

.btn.off {
    background: #ccd0cc;
    border-color: #c4c8c4;
    color: #8f8f8f;
}

.bw-buttons .btn:nth-child(3) {
    width: 79px;
}

.bw-rule {
    height: 2px;
    margin: 6px 0 0 -3px;
    background: #b0b0b0;
}

.wmi-title {
    margin-top: 5px;
    font-size: 8.5px;
    font-weight: 700;
    color: #111;
}

.wmi-desc {
    margin: 3px 0 0 2px;
    font-size: 8px;
    letter-spacing: -.1px;
    color: #222;
}

.wmi-row {
    display: flex;
    align-items: center;
    margin: 4px 0 0 2px;
}

.wmi-select {
    width: 215px;
    height: 15px;
    display: flex;
    align-items: center;
    padding-left: 3px;
    background: #e4e4e4;
    border: 1px solid #adadad;
    font-size: 8px;
    color: #222;
}

.wmi-chev {
    width: 10px;
    height: 10px;
    margin-left: auto;
    margin-right: 2px;
}

.open {
    width: 52px;
    margin-left: 12px;
}

.statusbar {
    height: 16px;
    display: flex;
    background: #f0f0f0;
    border-top: 1px solid #d9d9d9;
    flex-shrink: 0;
}

.st {
    border-left: 1px solid #c8c8c8;
}

.backwin .st-a {
    margin-left: 433px;
    width: 95px;
}

.gpe-small .st-a {
    margin-left: 405px;
    width: 96px;
}

/* windows taskbar */
.taskbar {
    height: 29px;
    background: #0b111f;
    display: flex;
    align-items: center;
    flex-shrink: 0;
}

.tb-win {
    width: 13px;
    height: 13px;
    margin-left: 11px;
}

.tb-search {
    width: 13px;
    height: 13px;
    margin-left: 22px;
}

.tb-view {
    width: 13px;
    height: 13px;
    margin-left: 20px;
}

.tb-ie {
    width: 18px;
    height: 18px;
    margin-left: 22px;
}

.tb-folder {
    width: 16px;
    height: 16px;
    margin-left: 18px;
}

.tb-item {
    height: 100%;
    display: flex;
    align-items: center;
    justify-content: center;
    border-bottom: 1px solid #5aa4e0;
}

.tb-item svg {
    width: 18px;
    height: 18px;
}

.tb-gold {
    width: 26px;
    margin-left: 13px;
}

.tb-scroll {
    width: 23px;
    margin-left: 10px;
}

.tb-active {
    width: 34px;
    margin-left: 5px;
    background: #2b3848;
}

.tb-up {
    width: 10px;
    height: 7px;
    margin-left: 187px;
}

.tb-net {
    width: 13px;
    height: 13px;
    margin-left: 24px;
}

.tb-clock {
    display: flex;
    flex-direction: column;
    align-items: center;
    width: 40px;
    margin-left: 2px;
    font: 9.5px/13px Roboto, sans-serif;
    color: #e8e8e8;
}

.tb-note {
    width: 13px;
    height: 13px;
    margin-left: 15px;
}

/* attackbox controls */
.thm {
    height: 31px;
    background: #151c2e;
    display: flex;
    align-items: center;
    padding-left: 13px;
    gap: 16px;
    font-family: Lato, sans-serif;
    flex-shrink: 0;
}

.thm-ic {
    width: 15px;
    height: 15px;
}

.thm-tabs {
    display: flex;
    height: 25px;
    margin-left: 2px;
    border: 1px solid #2f384c;
    border-radius: 5px;
    overflow: hidden;
}

.thm-tab {
    display: flex;
    align-items: center;
    padding: 0 9px;
    font-size: 11.2px;
    color: #eef1f6;
    white-space: nowrap;
}

.thm-tab.on {
    background: #4a5164;
}

.thm-time {
    margin-left: auto;
    margin-right: 14px;
    font-size: 13.4px;
    color: #fff;
}

.wallpaper {
    height: 7px;
    display: flex;
    background: #2f3125;
}

.wp-light {
    width: 282px;
    margin-left: 48px;
    background: #eeeeee;
}

.wp-grey {
    width: 48px;
    margin-left: 498px;
    background: #55584a;
}
```
